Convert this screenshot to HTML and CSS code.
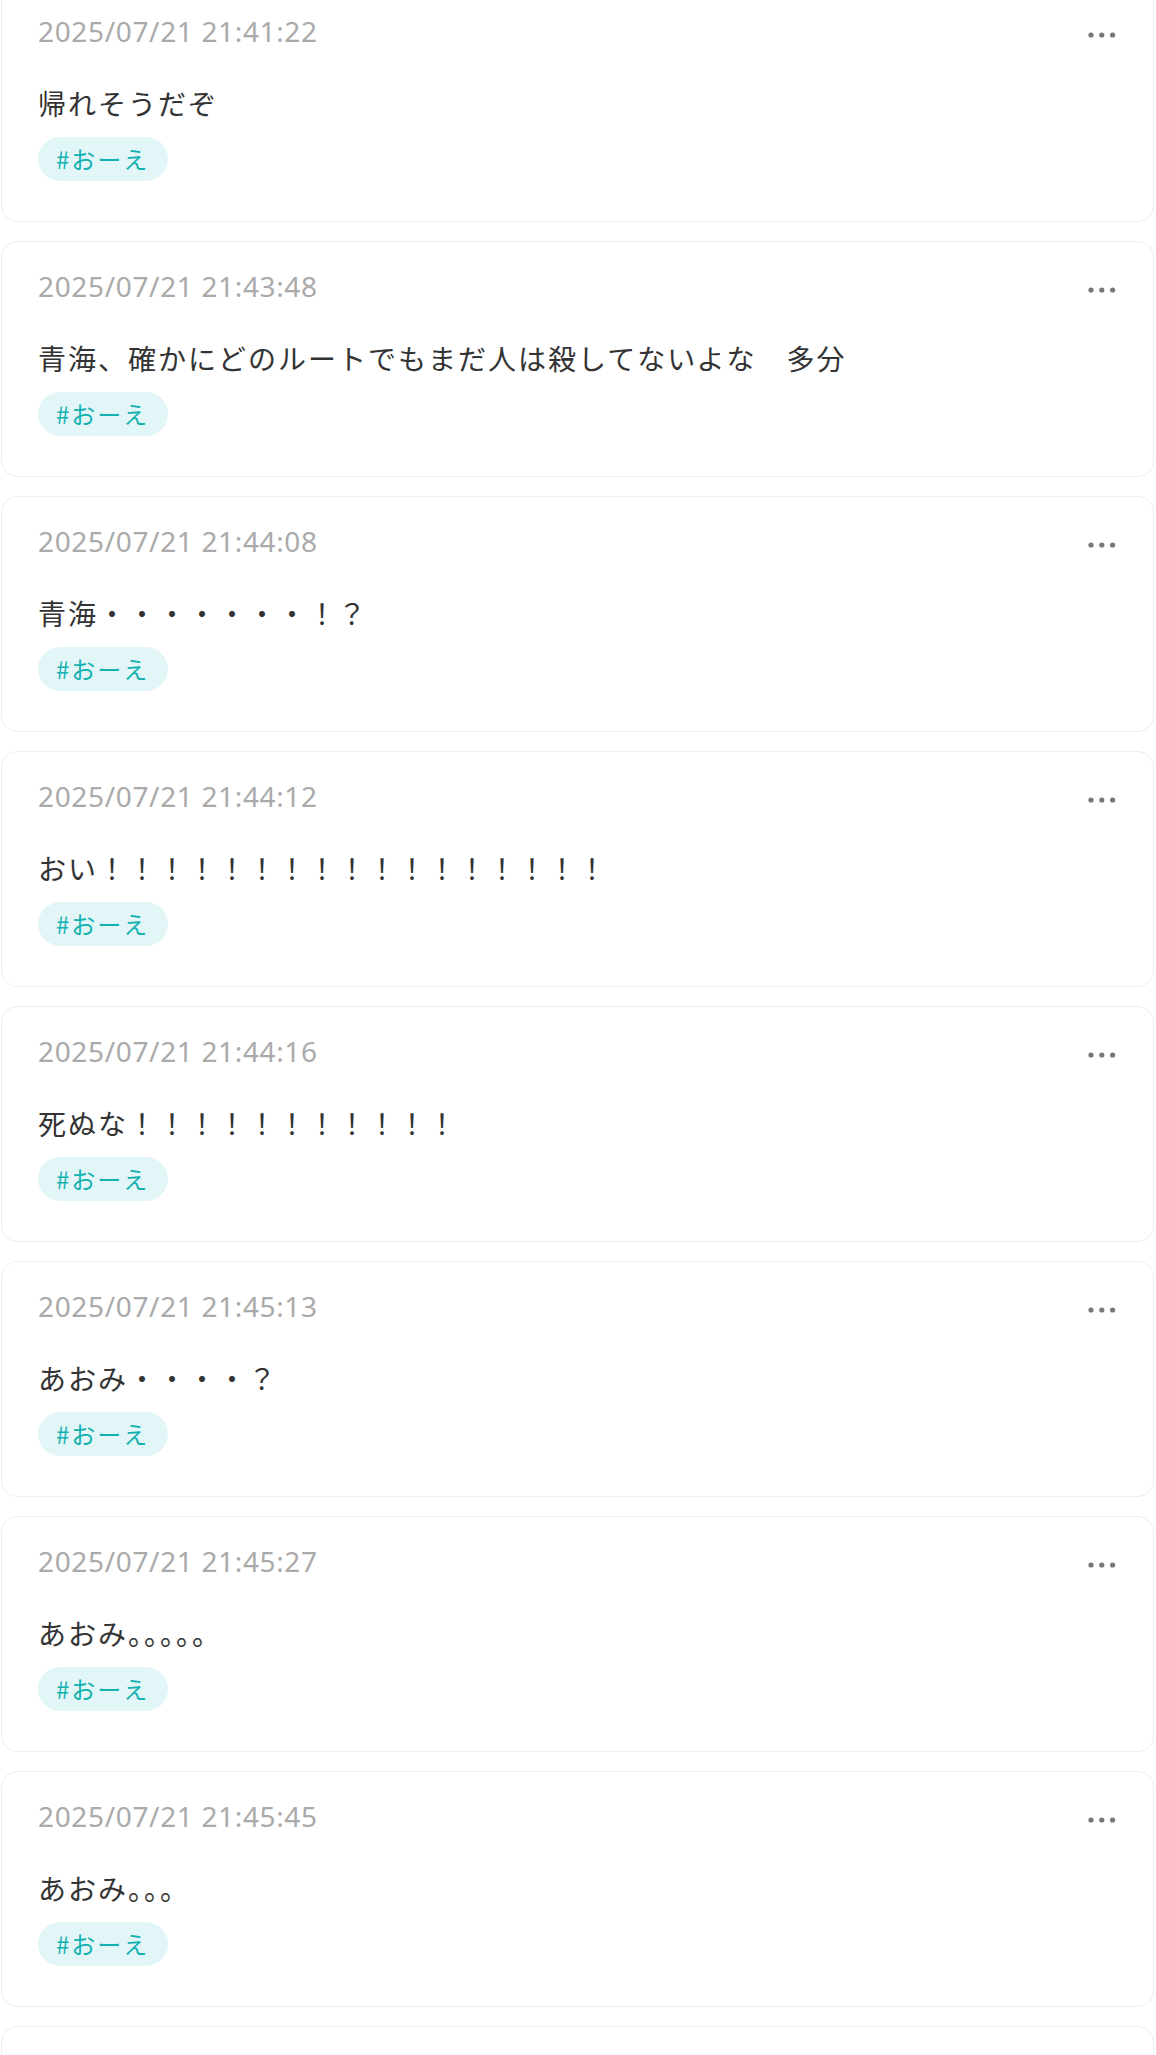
FILE: index.html
```html
<!DOCTYPE html>
<html lang="ja">
<head>
<meta charset="utf-8">
<title>タイムライン</title>
<link rel="stylesheet" href="styles.css">
</head>
<body>
<main class="feed">
  <article class="post">
    <header class="post-head">
      <time class="post-time">2025/07/21 21:41:22</time>
      <button class="post-menu" aria-label="メニュー"><svg width="30" height="6" viewBox="0 0 30 6"><circle cx="4" cy="3" r="2.6"/><circle cx="14.8" cy="3" r="2.6"/><circle cx="25.6" cy="3" r="2.6"/></svg></button>
    </header>
    <p class="post-body">帰れそうだぞ</p>
    <div class="post-tags"><span class="tag">#おーえ</span></div>
  </article>
  <article class="post">
    <header class="post-head">
      <time class="post-time">2025/07/21 21:43:48</time>
      <button class="post-menu" aria-label="メニュー"><svg width="30" height="6" viewBox="0 0 30 6"><circle cx="4" cy="3" r="2.6"/><circle cx="14.8" cy="3" r="2.6"/><circle cx="25.6" cy="3" r="2.6"/></svg></button>
    </header>
    <p class="post-body">青海、確かにどのルートでもまだ人は殺してないよな　多分</p>
    <div class="post-tags"><span class="tag">#おーえ</span></div>
  </article>
  <article class="post">
    <header class="post-head">
      <time class="post-time">2025/07/21 21:44:08</time>
      <button class="post-menu" aria-label="メニュー"><svg width="30" height="6" viewBox="0 0 30 6"><circle cx="4" cy="3" r="2.6"/><circle cx="14.8" cy="3" r="2.6"/><circle cx="25.6" cy="3" r="2.6"/></svg></button>
    </header>
    <p class="post-body">青海・・・・・・・！？</p>
    <div class="post-tags"><span class="tag">#おーえ</span></div>
  </article>
  <article class="post">
    <header class="post-head">
      <time class="post-time">2025/07/21 21:44:12</time>
      <button class="post-menu" aria-label="メニュー"><svg width="30" height="6" viewBox="0 0 30 6"><circle cx="4" cy="3" r="2.6"/><circle cx="14.8" cy="3" r="2.6"/><circle cx="25.6" cy="3" r="2.6"/></svg></button>
    </header>
    <p class="post-body">おい！！！！！！！！！！！！！！！！！</p>
    <div class="post-tags"><span class="tag">#おーえ</span></div>
  </article>
  <article class="post">
    <header class="post-head">
      <time class="post-time">2025/07/21 21:44:16</time>
      <button class="post-menu" aria-label="メニュー"><svg width="30" height="6" viewBox="0 0 30 6"><circle cx="4" cy="3" r="2.6"/><circle cx="14.8" cy="3" r="2.6"/><circle cx="25.6" cy="3" r="2.6"/></svg></button>
    </header>
    <p class="post-body">死ぬな！！！！！！！！！！！</p>
    <div class="post-tags"><span class="tag">#おーえ</span></div>
  </article>
  <article class="post">
    <header class="post-head">
      <time class="post-time">2025/07/21 21:45:13</time>
      <button class="post-menu" aria-label="メニュー"><svg width="30" height="6" viewBox="0 0 30 6"><circle cx="4" cy="3" r="2.6"/><circle cx="14.8" cy="3" r="2.6"/><circle cx="25.6" cy="3" r="2.6"/></svg></button>
    </header>
    <p class="post-body">あおみ・・・・？</p>
    <div class="post-tags"><span class="tag">#おーえ</span></div>
  </article>
  <article class="post">
    <header class="post-head">
      <time class="post-time">2025/07/21 21:45:27</time>
      <button class="post-menu" aria-label="メニュー"><svg width="30" height="6" viewBox="0 0 30 6"><circle cx="4" cy="3" r="2.6"/><circle cx="14.8" cy="3" r="2.6"/><circle cx="25.6" cy="3" r="2.6"/></svg></button>
    </header>
    <p class="post-body">あおみ。。。。。</p>
    <div class="post-tags"><span class="tag">#おーえ</span></div>
  </article>
  <article class="post">
    <header class="post-head">
      <time class="post-time">2025/07/21 21:45:45</time>
      <button class="post-menu" aria-label="メニュー"><svg width="30" height="6" viewBox="0 0 30 6"><circle cx="4" cy="3" r="2.6"/><circle cx="14.8" cy="3" r="2.6"/><circle cx="25.6" cy="3" r="2.6"/></svg></button>
    </header>
    <p class="post-body">あおみ。。。</p>
    <div class="post-tags"><span class="tag">#おーえ</span></div>
  </article>
  <article class="post">
    <header class="post-head">
      <time class="post-time"></time>
    </header>
  </article>
</main>
</body>
</html>
```

FILE: styles.css
```css
html, body {
  margin: 0;
  padding: 0;
  background: #ffffff;
}

body {
  font-family: "Noto Sans CJK JP", "Noto Sans", sans-serif;
  color: #333333;
}

.feed {
  display: flex;
  flex-direction: column;
  gap: 19px;
  padding: 0 2px 0 1px;
  margin-top: -14px;
}

.post {
  border: 1px solid #eeeeee;
  border-radius: 16px;
  background: #ffffff;
  padding: 23px 36px 40px 36px;
  min-height: 170px;
}

.post-head {
  display: flex;
  justify-content: space-between;
  align-items: flex-start;
}

.post-time {
  font-family: "Noto Sans", "Noto Sans CJK JP", sans-serif;
  font-size: 28px;
  line-height: 42px;
  height: 42px;
  color: #aaaaaa;
  letter-spacing: 0.65px;
}

.post-menu {
  border: 0;
  background: none;
  padding: 22px 0 0 0;
  margin: 0;
  line-height: 0;
  fill: #777777;
  cursor: pointer;
}

.post-body {
  margin: 29px 0 0 0;
  font-size: 28px;
  line-height: 45px;
  letter-spacing: 2px;
  color: #333333;
}

.post-tags {
  display: flex;
  margin-top: 11px;
}

.tag {
  display: inline-block;
  background: #e3f6f7;
  color: #14b1b1;
  font-size: 24px;
  line-height: 36px;
  padding: 4px 19px 4px 18px;
  border-radius: 22px;
  letter-spacing: 2px;
}
```
